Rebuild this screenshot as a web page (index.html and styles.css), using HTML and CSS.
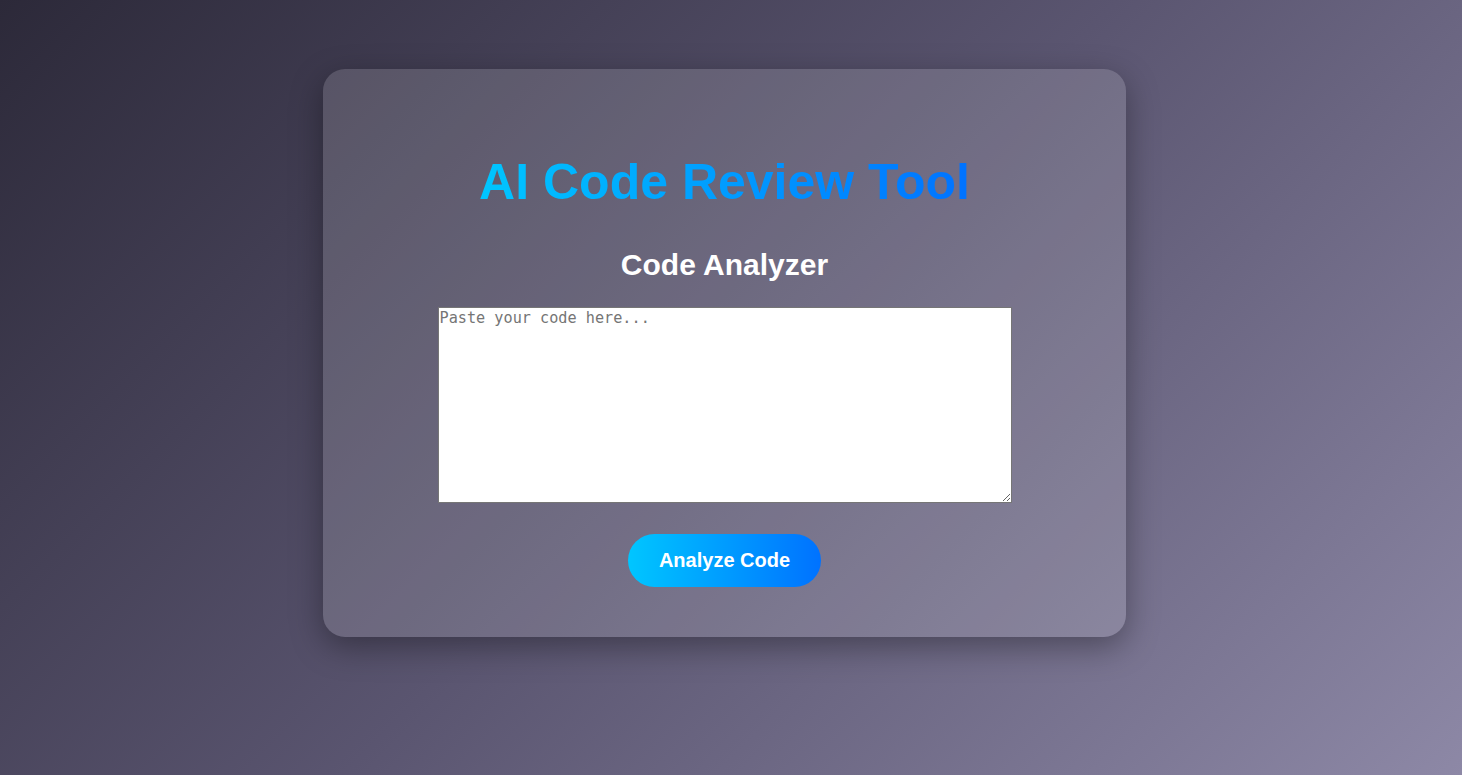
FILE: index.html
```html
<!DOCTYPE html>
<html lang="en">
<head>
<meta charset="utf-8">
<title>AI Code Review Tool</title>
<link rel="stylesheet" href="styles.css">
</head>
<body>
  <main class="card">
    <h1 class="title">AI Code Review Tool</h1>
    <section class="analyzer">
      <h2 class="subtitle">Code Analyzer</h2>
      <textarea class="code-input" placeholder="Paste your code here..."></textarea>
      <button class="analyze-btn" type="button">Analyze Code</button>
    </section>
  </main>
</body>
</html>
```

FILE: styles.css
```css
html, body {
  height: 100%;
}
body {
  margin: 0;
  min-height: 775px;
  background: linear-gradient(135deg, #2c2939 0%, #5a5570 50%, #8d88a6 100%);
  font-family: "Liberation Sans", Arial, sans-serif;
  display: flex;
  justify-content: center;
  align-items: flex-start;
  padding-right: 13px;
  box-sizing: border-box;
}
.card {
  margin-top: 69px;
  width: 803px;
  height: 568px;
  box-sizing: border-box;
  border-radius: 22px;
  background: rgba(255, 255, 255, 0.14);
  box-shadow: 0 10px 32px rgba(0, 0, 0, 0.35);
  padding: 0 40px;
  display: flex;
  flex-direction: column;
  align-items: center;
}
.title {
  margin: 85px 0 0;
  font-size: 50px;
  font-weight: 700;
  line-height: 1.15;
  background: linear-gradient(90deg, #00c6ff, #0072ff);
  -webkit-background-clip: text;
  background-clip: text;
  color: transparent;
}
.analyzer {
  display: flex;
  flex-direction: column;
  align-items: center;
}
.subtitle {
  margin: 36px 0 0;
  color: #ffffff;
  font-size: 30px;
  font-weight: 700;
  line-height: 1.15;
}
.code-input {
  margin-top: 25px;
  width: 574px;
  height: 196px;
  box-sizing: border-box;
  border: 1px solid #767676;
  background: #ffffff;
  font-family: "DejaVu Sans Mono", monospace;
  font-size: 15.2px;
  padding: 1px;
  resize: both;
}
.code-input::placeholder {
  color: #757575;
}
.analyze-btn {
  margin-top: 31px;
  border: none;
  border-radius: 30px;
  padding: 15px 31px;
  background: linear-gradient(90deg, #00c6ff, #0072ff);
  color: #ffffff;
  font-family: "Liberation Sans", Arial, sans-serif;
  font-size: 20px;
  font-weight: 700;
  line-height: 23px;
  cursor: pointer;
}
```
